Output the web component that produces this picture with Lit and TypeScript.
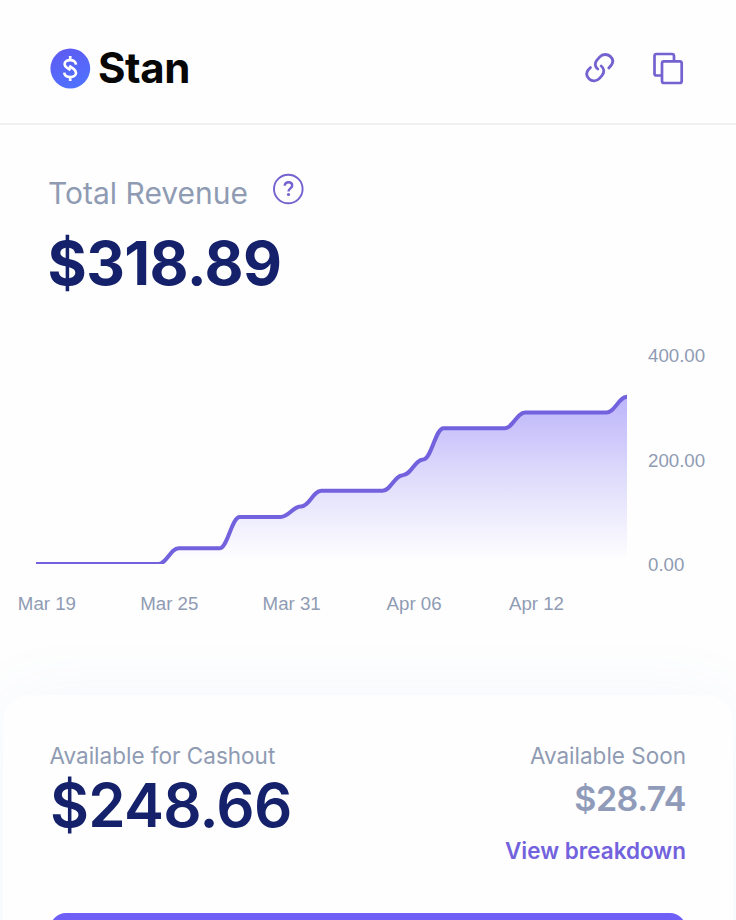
import { LitElement, html, css, svg } from "lit";
import { customElement, property } from "lit/decorators.js";

const VALUES = [
  0, 0, 0, 0, 0, 0, 0, 30, 30, 30, 90, 90, 90, 110, 140, 140, 140, 140, 170,
  200, 260, 260, 260, 260, 290, 290, 290, 290, 290, 320,
];

@customElement("revenue-chart")
class RevenueChart extends LitElement {
  @property({ attribute: false }) values: number[] = VALUES;

  static styles = css`
    :host {
      display: grid;
      grid-template-columns: 591px 1fr;
      grid-template-rows: 210px auto;
      column-gap: 21px;
      padding-left: 36px;
      font: 18.7px/20px "Liberation Sans", Arial, sans-serif;
      color: #8f9bb3;
    }
    svg { display: block; width: 591px; height: 210px; }
    .y {
      display: flex;
      flex-direction: column;
      justify-content: space-between;
      margin: -8px 0 -11px;
    }
    .x {
      display: grid;
      grid-template-columns: repeat(5, 122.4px);
      margin: 30px 0 0 -50.3px;
      text-align: center;
      grid-column: 1 / 3;
    }
  `;

  render() {
    const step = 591 / (this.values.length - 1);
    const y = (v: number) => 210 - v * 0.5225;
    let line = `M0 ${y(this.values[0])}`;
    for (let i = 1; i < this.values.length; i++) {
      const x0 = (i - 1) * step;
      const x1 = i * step;
      const a = y(this.values[i - 1]);
      const b = y(this.values[i]);
      line += `C${x0 + step * 0.4} ${a} ${x1 - step * 0.4} ${b} ${x1} ${b}`;
    }
    return html`
      <svg viewBox="0 0 591 210">
        ${svg`
          <defs>
            <linearGradient id="fill" gradientUnits="userSpaceOnUse" x1="0" y1="43" x2="0" y2="206">
              <stop offset="0" stop-color="#bcb5fa"/>
              <stop offset="0.5" stop-color="#dfdcfc"/>
              <stop offset="1" stop-color="#fefefe"/>
            </linearGradient>
          </defs>
          <path d="${line}L591 210L0 210Z" fill="url(#fill)"/>
          <path d=${line} fill="none" stroke="#7362dd" stroke-width="4"/>
        `}
      </svg>
      <div class="y"><span>400.00</span><span>200.00</span><span>0.00</span></div>
      <div class="x">
        ${["Mar 19", "Mar 25", "Mar 31", "Apr 06", "Apr 12"].map((d) => html`<span>${d}</span>`)}
      </div>
    `;
  }
}

@customElement("app-root")
class AppRoot extends LitElement {
  static styles = css`
    :host {
      display: block;
      height: 920px;
      overflow: hidden;
      background: #fefefe;
      font-family: Inter, sans-serif;
      color: #8f9bb3;
    }
    svg { display: block; }
    header {
      box-sizing: border-box;
      height: 125px;
      padding: 13px 51px 0 50px;
      border-bottom: 2px solid #f0f0f1;
      display: flex;
      align-items: center;
      justify-content: space-between;
    }
    .brand { display: flex; align-items: center; gap: 7px; }
    .name { font-size: 42px; line-height: 50px; font-weight: 700; letter-spacing: -0.4px; color: #070708; }
    .tools { display: flex; align-items: center; gap: 34px; }
    .summary { padding: 48px 48px 0; height: 181px; box-sizing: border-box; }
    .title { display: flex; align-items: flex-start; gap: 24px; }
    .title h1 { margin: 1px 0 0; font-size: 30px; line-height: 39px; font-weight: 400; }
    .title svg { margin-left: -0.5px; }
    .amount { font-size: 60px; line-height: 62px; font-weight: 700; letter-spacing: -0.6px; color: #15226b; white-space: nowrap; }
    .total { margin: 19px 0 0 -0.5px; }
    revenue-chart { margin-top: 48px; height: 341px; box-sizing: border-box; }
    .card {
      box-sizing: border-box;
      height: 300px;
      margin: 0 3px;
      padding: 47px 47px 0;
      border-radius: 26px;
      background: #fefefe;
      box-shadow: 0 0 70px rgba(90, 140, 225, 0.06);
    }
    .row { display: flex; justify-content: space-between; height: 171.4px; }
    .label { font-size: 22.5px; line-height: 28px; }
    .for { margin-left: -0.5px; }
    .cash { font-weight: 600; margin-top: 3.5px; letter-spacing: -0.75px; }
    .soon { text-align: right; }
    .pending { font-size: 34px; line-height: 42px; font-weight: 600; letter-spacing: -0.5px; margin: 8px 0 0; color: #8f9bb9; }
    .link { font-size: 22.5px; line-height: 28px; font-weight: 600; color: #7362dd; margin-top: 17px; }
    .button { height: 80px; border-radius: 16px; background: #6f5ff6; }
  `;

  render() {
    return html`
      <header>
        <div class="brand">
          <svg width="41" height="41" viewBox="0 0 41 41" fill="none">
            <defs>
              <linearGradient id="g" x1="0" y1="0" x2="0.4" y2="1">
                <stop stop-color="#6059f0" /><stop offset="1" stop-color="#5070ff" />
              </linearGradient>
            </defs>
            <circle cx="20.3" cy="20.5" r="19.9" fill="url(#g)" />
            <path d="M26 16.6C25.2 10.6 14.6 11 14.6 16.2C14.6 18 15.8 19 17.3 20L20.5 22.2M19.2 17.8L23.6 20.8C25 21.8 26 23 26 25C26 30 15 30.8 14.2 24.6M20.2 8V12.5M20.2 28.8V33" stroke="#fff" stroke-width="2.7" />
          </svg>
          <span class="name">Stan</span>
        </div>
        <div class="tools">
          <svg width="34" height="34" viewBox="583.5 51 34 34" fill="none" stroke="#7362cf" stroke-width="2.8" stroke-linecap="round">
            <path d="M598.3 69C595.2 66.6 595 63.2 597.4 60.2L600.3 56.9C603.1 53.8 608 53.8 610.8 56.4C613.7 59 613.9 62.6 611.3 65.8L609.3 68" />
            <path d="M601.7 66C604.9 68.4 605 72.2 602.6 75.3L600 78.3C597.2 81.4 592.5 81.6 589.7 79C586.9 76.4 586.5 72.8 588.9 69.7L590.9 67.6" />
          </svg>
          <svg width="34" height="34" viewBox="651 51 34 34" fill="none" stroke="#7362cf" stroke-width="2.7">
            <path d="M661 75.5H656.5A2 2 0 0 1 654.5 73.5V56A2 2 0 0 1 656.5 54H672A2 2 0 0 1 674 56V60" />
            <rect x="662" y="61.3" width="19.7" height="21.7" rx="2" />
          </svg>
        </div>
      </header>
      <section class="summary">
        <div class="title">
          <h1>Total Revenue</h1>
          <svg width="32" height="32" viewBox="271 173 32 32" fill="none" stroke="#7362cf" stroke-width="1.9">
            <circle cx="287.3" cy="189" r="14.3" />
            <path d="M283.7 185.8C284 181 291.2 181.2 291.2 185.6C291.2 188.4 287.5 188.3 287.5 191.4" stroke-width="2.4" />
            <circle cx="287.5" cy="194.5" r="1.6" fill="#7362cf" stroke="none" />
          </svg>
        </div>
        <div class="amount total">$318.89</div>
      </section>
      <revenue-chart></revenue-chart>
      <section class="card">
        <div class="row">
          <div>
            <div class="label for">Available for Cashout</div>
            <div class="amount cash">$248.66</div>
          </div>
          <div class="soon">
            <div class="label">Available Soon</div>
            <div class="pending">$28.74</div>
            <div class="link">View breakdown</div>
          </div>
        </div>
        <div class="button"></div>
      </section>
    `;
  }
}
